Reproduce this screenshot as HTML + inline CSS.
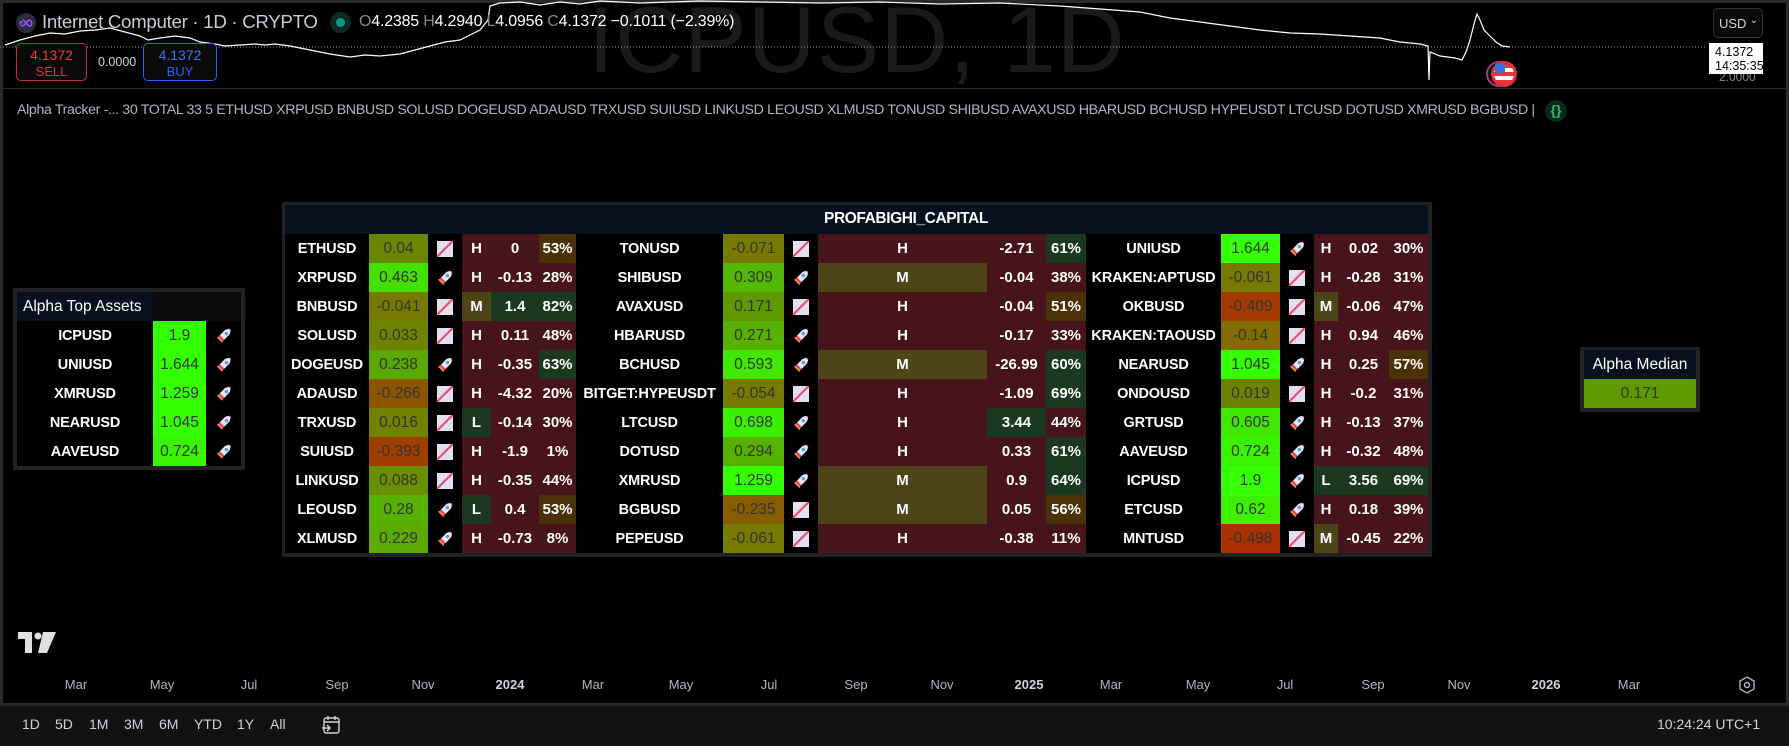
<!DOCTYPE html>
<html><head><meta charset="utf-8"><style>
*{margin:0;padding:0;box-sizing:border-box}
body{width:1789px;height:746px;background:#000;overflow:hidden;position:relative;font-family:"Liberation Sans",sans-serif;color:#d1d4dc}
.a{position:absolute}
.frame{position:absolute;left:0;top:0;width:1789px;height:706px;border:3px solid #2a2a2a;border-bottom:none}
.tb{position:absolute;left:0;top:703px;width:1789px;height:43px;background:#121212;border-top:3px solid #2a2a2a}
table{border-collapse:collapse;table-layout:fixed}
td{height:29px;padding:0;text-align:center;white-space:nowrap;overflow:hidden;font-size:15px}
td.n{color:#fff;font-weight:bold;font-size:14.5px;letter-spacing:-0.2px}
td.v{color:#333;font-size:15.5px}
td.h{color:#fff;font-weight:bold;font-size:15px}
.R{background:#48141c}.G{background:#1b3820}.Y{background:#4d4518}.B{background:#4a3208}
.ax{position:absolute;top:677px;font-size:13px;color:#b2b5be;transform:translateX(-50%)}
.ax.b{font-weight:bold;color:#d1d4dc}
.tf{position:absolute;top:716px;font-size:14px;color:#d1d4dc}
i.dn{display:inline-block;width:16px;height:16px;vertical-align:middle;background:
linear-gradient(135deg,transparent 0 44%,#e8507a 44% 54%,transparent 54%),#e4dfee}
i.up{display:inline-block;width:16px;height:16px;vertical-align:middle;background:
radial-gradient(circle at 65% 35%,#5a9be6 0 1.5px,transparent 2px),
linear-gradient(45deg,transparent 0 22%,#f08a2a 22% 30%,#f0407a 30% 40%,#e8e8ee 40% 86%,#f0407a 86% 92%,transparent 92%);
clip-path:polygon(100% 0,60% 12%,20% 52%,0 64%,0 100%,36% 100%,48% 80%,88% 40%)}
</style></head><body>
<div class="frame"></div>
<div class="a" style="left:588px;top:-14px;font-size:94px;color:#1a1a1a;letter-spacing:1px;white-space:nowrap">ICPUSD, 1D</div>
<svg class="a" style="left:0;top:0" width="1789" height="100">
<line x1="0" y1="47" x2="1705" y2="47" stroke="#9a9a9a" stroke-width="1" stroke-dasharray="1,2"/>
<polyline fill="none" stroke="#fff" stroke-width="1.2" points="5,45 20,40 35,36 50,33 65,34 80,31 95,30 110,28 125,32 140,36 148,40 160,38 175,36 190,38 200,42 215,44 225,46 240,45 255,44 265,45 275,44 290,46 310,50 330,54 350,57 365,55 380,56 400,54 415,50 430,46 445,42 460,40 470,35 480,30 488,20 490,6 500,3 520,2 540,5 560,2 580,4 600,1 640,3 700,1 760,2 820,3 880,2 940,4 1000,3 1060,6 1100,9 1140,12 1170,18 1200,22 1230,26 1260,30 1290,33 1320,34 1350,36 1380,38 1400,42 1420,44 1428,46 1429,80 1430,52 1440,56 1455,58 1462,60 1466,52 1470,40 1474,24 1477,14 1480,20 1484,30 1490,36 1496,42 1502,46 1510,47"/>
</svg>
<div class="a" style="left:16px;top:13px;width:20px;height:20px;border-radius:50%;background:#2a2e39"></div>
<svg class="a" style="left:19px;top:18px" width="14" height="10"><path d="M3.5 5 C1 1,0 7,3.5 8 C5 8,6 6,7 5 C8 4,9 2,10.5 2 C14 3,13 9,10.5 8 C9 8,8 6,7 5 C6 4,5 2,3.5 2" fill="none" stroke="#9b59ff" stroke-width="1.4"/></svg>
<div class="a" style="left:42px;top:11px;font-size:18.7px;color:#c8cbd2;white-space:nowrap;letter-spacing:-0.3px">Internet Computer · 1D · CRYPTO</div>
<div class="a" style="left:330px;top:12px;width:21px;height:21px;border-radius:50%;background:#0d2a22"></div>
<div class="a" style="left:336px;top:18px;width:9px;height:9px;border-radius:50%;background:#089981"></div>
<div class="a" style="left:359px;top:13px;font-size:16px;color:#fff;white-space:nowrap;letter-spacing:-0.2px"><span style="color:#888">O</span>4.2385 <span style="color:#888">H</span>4.2940 <span style="color:#888">L</span>4.0956 <span style="color:#888">C</span>4.1372 −0.1011 (−2.39%)</div>
<div class="a" style="left:16px;top:43px;width:71px;height:38px;border:1px solid #c2303f;border-radius:5px;background:#0a0a0a;text-align:center;font-size:14px;line-height:16px;padding-top:3px;color:#f23645">4.1372<br><span style="font-size:13px;color:#d8313f">SELL</span></div>
<div class="a" style="left:98px;top:55px;font-size:12.5px;color:#d1d4dc">0.0000</div>
<div class="a" style="left:143px;top:43px;width:74px;height:38px;border:1px solid #2962ff;border-radius:5px;background:#0a0a0a;text-align:center;font-size:14px;line-height:16px;padding-top:3px;color:#3a73ff">4.1372<br><span style="font-size:13px;color:#2962ff">BUY</span></div>
<div class="a" style="left:3px;top:88px;width:1783px;height:1px;background:#2a2a2a"></div>
<div class="a" style="left:17px;top:102px;font-size:14.2px;color:#b2b5be;letter-spacing:-0.35px;white-space:nowrap">Alpha Tracker -... 30 TOTAL 33 5 ETHUSD XRPUSD BNBUSD SOLUSD DOGEUSD ADAUSD TRXUSD SUIUSD LINKUSD LEOUSD XLMUSD TONUSD SHIBUSD AVAXUSD HBARUSD BCHUSD HYPEUSDT LTCUSD DOTUSD XMRUSD BGBUSD |</div>
<div class="a" style="left:1545px;top:100px;width:22px;height:22px;border-radius:50%;background:#0c2a1c;color:#2ebd6b;font-size:14px;text-align:center;line-height:21px;font-weight:bold">{}</div>
<div class="a" style="left:1713px;top:8px;width:50px;height:30px;border:1px solid #333;border-radius:5px;background:#0a0a0a;font-size:13px;color:#d1d4dc;padding:7px 0 0 5px">USD<span style="position:absolute;right:4px;top:6px;font-size:10px">⌄</span></div>
<div class="a" style="left:1719px;top:70px;font-size:12px;color:#888">2.0000</div>
<div class="a" style="left:1709px;top:43px;width:54px;height:31px;background:#fff;color:#000;font-size:12.5px;line-height:14px;padding:2px 0 0 6px">4.1372<br>14:35:35</div>
<div class="a" style="left:1486px;top:61px;width:26px;height:26px;border-radius:50%;border:2px solid #9b3a8a"></div>
<div class="a" style="left:1491px;top:61px;width:26px;height:26px;border-radius:50%;border:3px solid #e0303a;background:linear-gradient(#e33 0 20%,#fff 20% 40%,#e33 40% 60%,#fff 60% 80%,#e33 80%)"></div>
<div class="a" style="left:1495px;top:64px;width:10px;height:9px;background:#3b6fd6"></div>

<div class="a" style="left:13px;top:288px;width:232px;height:182px;background:#222"></div>
<div class="a" style="left:17px;top:292px;width:224px;height:174px;background:#000">
<table style="width:224px">
<col style="width:136px"><col style="width:53px"><col style="width:35px">
<tr><td style="background:#06101f;color:#fff;font-size:15.5px;text-align:left;padding-left:6px">Alpha Top Assets</td><td colspan="2" style="background:#0b0b0b"></td></tr>
<tr><td class="n">ICPUSD</td><td class="v" style="background:#33ff00">1.9</td><td><i class="up"></i></td></tr>
<tr><td class="n">UNIUSD</td><td class="v" style="background:#33ff00">1.644</td><td><i class="up"></i></td></tr>
<tr><td class="n">XMRUSD</td><td class="v" style="background:#33ff00">1.259</td><td><i class="up"></i></td></tr>
<tr><td class="n">NEARUSD</td><td class="v" style="background:#33ff00">1.045</td><td><i class="up"></i></td></tr>
<tr><td class="n">AAVEUSD</td><td class="v" style="background:#39f300">0.724</td><td><i class="up"></i></td></tr>
</table></div>

<div class="a" style="left:1580px;top:347px;width:120px;height:65px;background:#222"></div>
<div class="a" style="left:1584px;top:350px;width:112px;height:29px;background:#06101f;color:#fff;font-size:15.5px;text-align:center;line-height:29px">Alpha Median</div>
<div class="a" style="left:1584px;top:379px;width:112px;height:29px;background:#5f9900;color:#333;font-size:15.5px;text-align:center;line-height:29px">0.171</div>

<div class="a" style="left:282px;top:202px;width:1150px;height:355px;background:#222"></div>
<div class="a" style="left:285px;top:205px;width:1143px;height:29px;background:#06101f"></div>
<div class="a" style="left:824px;top:210px;font-size:15.5px;color:#fff;font-weight:bold;letter-spacing:-0.4px">PROFABIGHI_CAPITAL</div>
<div class="a" style="left:285px;top:234px;width:1143px;height:319px;background:#000">
<table style="width:1143px">
<col style="width:84px"><col style="width:59px"><col style="width:34px"><col style="width:29px"><col style="width:48px"><col style="width:37px">
<col style="width:147px"><col style="width:61px"><col style="width:34px"><col style="width:169px"><col style="width:59px"><col style="width:40px">
<col style="width:135px"><col style="width:59px"><col style="width:34px"><col style="width:24px"><col style="width:51px"><col style="width:39px">
<tbody>
<tr><td class="n">ETHUSD</td><td class="v" style="background:#6b8600">0.04</td><td><i class="dn"></i></td><td class="h R">H</td><td class="h R">0</td><td class="h B">53%</td><td class="n">TONUSD</td><td class="v" style="background:#777a00">-0.071</td><td><i class="dn"></i></td><td class="h R">H</td><td class="h R">-2.71</td><td class="h G">61%</td><td class="n">UNIUSD</td><td class="v" style="background:#33ff00">1.644</td><td><i class="up"></i></td><td class="h R">H</td><td class="h R">0.02</td><td class="h R">30%</td></tr>
<tr><td class="n">XRPUSD</td><td class="v" style="background:#44e000">0.463</td><td><i class="up"></i></td><td class="h R">H</td><td class="h R">-0.13</td><td class="h R">28%</td><td class="n">SHIBUSD</td><td class="v" style="background:#55b800">0.309</td><td><i class="up"></i></td><td class="h Y">M</td><td class="h R">-0.04</td><td class="h R">38%</td><td class="n">KRAKEN:APTUSD</td><td class="v" style="background:#777a00">-0.061</td><td><i class="dn"></i></td><td class="h R">H</td><td class="h R">-0.28</td><td class="h R">31%</td></tr>
<tr><td class="n">BNBUSD</td><td class="v" style="background:#777a00">-0.041</td><td><i class="dn"></i></td><td class="h Y">M</td><td class="h G">1.4</td><td class="h G">82%</td><td class="n">AVAXUSD</td><td class="v" style="background:#5f9900">0.171</td><td><i class="dn"></i></td><td class="h R">H</td><td class="h R">-0.04</td><td class="h B">51%</td><td class="n">OKBUSD</td><td class="v" style="background:#a33b00">-0.409</td><td><i class="dn"></i></td><td class="h Y">M</td><td class="h R">-0.06</td><td class="h R">47%</td></tr>
<tr><td class="n">SOLUSD</td><td class="v" style="background:#6e8400">0.033</td><td><i class="dn"></i></td><td class="h R">H</td><td class="h R">0.11</td><td class="h R">48%</td><td class="n">HBARUSD</td><td class="v" style="background:#58b000">0.271</td><td><i class="up"></i></td><td class="h R">H</td><td class="h R">-0.17</td><td class="h R">33%</td><td class="n">KRAKEN:TAOUSD</td><td class="v" style="background:#826c00">-0.14</td><td><i class="dn"></i></td><td class="h R">H</td><td class="h R">0.94</td><td class="h R">46%</td></tr>
<tr><td class="n">DOGEUSD</td><td class="v" style="background:#5aa900">0.238</td><td><i class="up"></i></td><td class="h R">H</td><td class="h R">-0.35</td><td class="h G">63%</td><td class="n">BCHUSD</td><td class="v" style="background:#40e800">0.593</td><td><i class="up"></i></td><td class="h Y">M</td><td class="h R">-26.99</td><td class="h G">60%</td><td class="n">NEARUSD</td><td class="v" style="background:#33ff00">1.045</td><td><i class="up"></i></td><td class="h R">H</td><td class="h R">0.25</td><td class="h B">57%</td></tr>
<tr><td class="n">ADAUSD</td><td class="v" style="background:#8c5600">-0.266</td><td><i class="dn"></i></td><td class="h R">H</td><td class="h R">-4.32</td><td class="h R">20%</td><td class="n">BITGET:HYPEUSDT</td><td class="v" style="background:#777a00">-0.054</td><td><i class="dn"></i></td><td class="h R">H</td><td class="h R">-1.09</td><td class="h G">69%</td><td class="n">ONDOUSD</td><td class="v" style="background:#6f8200">0.019</td><td><i class="dn"></i></td><td class="h R">H</td><td class="h R">-0.2</td><td class="h R">31%</td></tr>
<tr><td class="n">TRXUSD</td><td class="v" style="background:#708200">0.016</td><td><i class="dn"></i></td><td class="h G">L</td><td class="h R">-0.14</td><td class="h R">30%</td><td class="n">LTCUSD</td><td class="v" style="background:#3bf000">0.698</td><td><i class="up"></i></td><td class="h R">H</td><td class="h G">3.44</td><td class="h R">44%</td><td class="n">GRTUSD</td><td class="v" style="background:#40e800">0.605</td><td><i class="up"></i></td><td class="h R">H</td><td class="h R">-0.13</td><td class="h R">37%</td></tr>
<tr><td class="n">SUIUSD</td><td class="v" style="background:#a03e00">-0.393</td><td><i class="dn"></i></td><td class="h R">H</td><td class="h R">-1.9</td><td class="h R">1%</td><td class="n">DOTUSD</td><td class="v" style="background:#56b200">0.294</td><td><i class="up"></i></td><td class="h R">H</td><td class="h R">0.33</td><td class="h G">61%</td><td class="n">AAVEUSD</td><td class="v" style="background:#39f300">0.724</td><td><i class="up"></i></td><td class="h R">H</td><td class="h R">-0.32</td><td class="h R">48%</td></tr>
<tr><td class="n">LINKUSD</td><td class="v" style="background:#689000">0.088</td><td><i class="dn"></i></td><td class="h R">H</td><td class="h R">-0.35</td><td class="h R">44%</td><td class="n">XMRUSD</td><td class="v" style="background:#33ff00">1.259</td><td><i class="up"></i></td><td class="h Y">M</td><td class="h R">0.9</td><td class="h G">64%</td><td class="n">ICPUSD</td><td class="v" style="background:#33ff00">1.9</td><td><i class="up"></i></td><td class="h G">L</td><td class="h G">3.56</td><td class="h G">69%</td></tr>
<tr><td class="n">LEOUSD</td><td class="v" style="background:#57b200">0.28</td><td><i class="up"></i></td><td class="h G">L</td><td class="h R">0.4</td><td class="h B">53%</td><td class="n">BGBUSD</td><td class="v" style="background:#885c00">-0.235</td><td><i class="dn"></i></td><td class="h Y">M</td><td class="h R">0.05</td><td class="h B">56%</td><td class="n">ETCUSD</td><td class="v" style="background:#3ff000">0.62</td><td><i class="up"></i></td><td class="h R">H</td><td class="h R">0.18</td><td class="h R">39%</td></tr>
<tr><td class="n">XLMUSD</td><td class="v" style="background:#5cab00">0.229</td><td><i class="up"></i></td><td class="h R">H</td><td class="h R">-0.73</td><td class="h R">8%</td><td class="n">PEPEUSD</td><td class="v" style="background:#777a00">-0.061</td><td><i class="dn"></i></td><td class="h R">H</td><td class="h R">-0.38</td><td class="h R">11%</td><td class="n">MNTUSD</td><td class="v" style="background:#aa3000">-0.498</td><td><i class="dn"></i></td><td class="h Y">M</td><td class="h R">-0.45</td><td class="h R">22%</td></tr>
</tbody></table></div>

<svg class="a" style="left:18px;top:632px" width="38" height="21"><path d="M0 0 H14 V21 H7 V7 H0 Z" fill="#e0e0e0"/><circle cx="20" cy="4" r="3.5" fill="#e0e0e0"/><path d="M25 0 H38 L29 21 H20 Z" fill="#e0e0e0"/></svg>

<div class="ax" style="left:76px">Mar</div><div class="ax" style="left:162px">May</div><div class="ax" style="left:249px">Jul</div><div class="ax" style="left:337px">Sep</div><div class="ax" style="left:423px">Nov</div><div class="ax b" style="left:510px">2024</div><div class="ax" style="left:593px">Mar</div><div class="ax" style="left:681px">May</div><div class="ax" style="left:769px">Jul</div><div class="ax" style="left:856px">Sep</div><div class="ax" style="left:942px">Nov</div><div class="ax b" style="left:1029px">2025</div><div class="ax" style="left:1111px">Mar</div><div class="ax" style="left:1198px">May</div><div class="ax" style="left:1285px">Jul</div><div class="ax" style="left:1373px">Sep</div><div class="ax" style="left:1459px">Nov</div><div class="ax b" style="left:1546px">2026</div><div class="ax" style="left:1629px">Mar</div>
<svg class="a" style="left:1739px;top:676px" width="16" height="18"><path d="M8 1 L15 5 V13 L8 17 L1 13 V5 Z" fill="none" stroke="#b2b5be" stroke-width="1.4"/><circle cx="8" cy="9" r="2.5" fill="none" stroke="#b2b5be" stroke-width="1.4"/></svg>

<div class="tb"></div>
<div class="tf" style="left:22px">1D</div><div class="tf" style="left:55px">5D</div><div class="tf" style="left:89px">1M</div><div class="tf" style="left:124px">3M</div><div class="tf" style="left:159px">6M</div><div class="tf" style="left:194px">YTD</div><div class="tf" style="left:237px">1Y</div><div class="tf" style="left:270px">All</div>
<svg class="a" style="left:320px;top:714px" width="22" height="22"><rect x="4" y="4" width="15" height="15" rx="2" fill="none" stroke="#d1d4dc" stroke-width="1.4"/><path d="M4 8 H19 M8 2 V6 M15 2 V6 M2 14 H10 M7 11 L10 14 L7 17" fill="none" stroke="#d1d4dc" stroke-width="1.4"/></svg>
<div class="tf" style="left:1657px;top:716px">10:24:24 UTC+1</div>
</body></html>
